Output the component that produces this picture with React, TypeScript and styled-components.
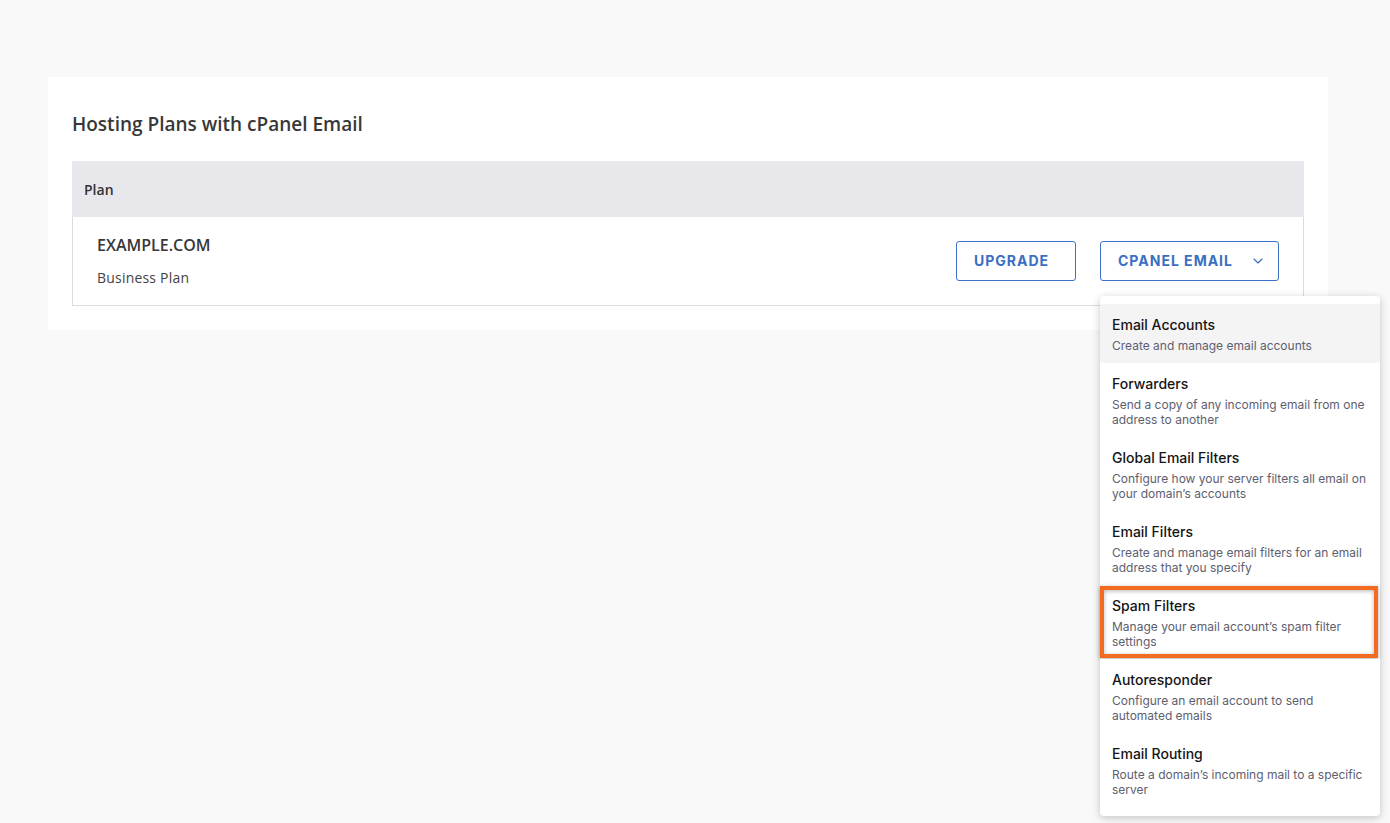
import * as React from 'react';
import styled, { createGlobalStyle } from 'styled-components';
import { ChevronDown } from 'lucide-react';

const GlobalStyle = createGlobalStyle`
    body {
        margin: 0;
        background: #f9f9f9;
        font-family: "Open Sans", "Noto Sans", sans-serif;
    }
`;

const Page = styled.div`
    padding: 77px 48px;
    min-height: 823px;
    box-sizing: border-box;
`;
const Card = styled.section`
    width: 1280px;
    box-sizing: border-box;
    background: #fff;
    padding: 33px 24px 24px;
`;
const Title = styled.h2`
    margin: 0 0 23px;
    font-size: 19px;
    line-height: 28px;
    font-weight: 600;
    color: #383838;
`;
const Table = styled.div`
    display: flex;
    flex-direction: column;
`;
const HeaderRow = styled.div`
    height: 56px;
    display: flex;
    align-items: center;
    padding: 0 12px;
    background: #e8e8ec;
    font-size: 14px;
    font-weight: 600;
    color: #333;
`;
const Row = styled.div`
    display: flex;
    align-items: center;
    justify-content: space-between;
    padding: 16px 24px 17px;
    border: 1px solid #dcdcdc;
    border-top: none;
`;
const PlanInfo = styled.div`
    display: flex;
    flex-direction: column;
    gap: 11px;
`;
const Domain = styled.div`
    font-size: 16px;
    line-height: 24px;
    font-weight: 600;
    color: #383838;
`;
const PlanName = styled.div`
    font-size: 14px;
    line-height: 20px;
    color: #444;
    letter-spacing: 0.2px;
`;
const Actions = styled.div`
    display: flex;
    gap: 24px;
`;
const Button = styled.button<{ $width: number }>`
    width: ${p => p.$width}px;
    height: 40px;
    box-sizing: border-box;
    display: flex;
    align-items: center;
    justify-content: space-between;
    padding: 0 12px 0 17px;
    background: #fff;
    border: 1px solid #3a73c4;
    border-radius: 3px;
    color: #3a6fc2;
    font-family: Inter, sans-serif;
    font-size: 14px;
    font-weight: 700;
    letter-spacing: 1px;
    cursor: pointer;
`;
const MenuAnchor = styled.div`
    position: relative;
`;
const Menu = styled.ul`
    position: absolute;
    top: calc(100% + 15px);
    left: 0;
    width: 280px;
    margin: 0;
    padding: 8px 0 9px;
    list-style: none;
    background: #fff;
    border-radius: 4px;
    box-shadow: 0 2px 8px rgba(0, 0, 0, 0.22);
    z-index: 10;
`;
const MenuItem = styled.li<{ $active?: boolean; $marked?: boolean }>`
    position: relative;
    padding: 11px 12px 10px;
    background: ${p => (p.$active ? '#f4f4f5' : '#fff')};
    font-family: Inter, sans-serif;
    &::after {
        content: '';
        display: ${p => (p.$marked ? 'block' : 'none')};
        position: absolute;
        inset: 1px 2px 1px 0;
        border: 4px solid #f26b21;
        box-shadow: 0 1px 4px rgba(0, 0, 0, 0.35), inset 0 1px 4px rgba(0, 0, 0, 0.3);
        pointer-events: none;
    }
`;
const ItemTitle = styled.div`
    font-size: 14px;
    line-height: 20px;
    font-weight: 500;
    color: #151515;
    margin-bottom: 3px;
`;
const ItemDesc = styled.div`
    font-size: 12px;
    line-height: 15px;
    color: #5d6070;
`;

const items = [
    { title: 'Email Accounts', desc: 'Create and manage email accounts' },
    { title: 'Forwarders', desc: 'Send a copy of any incoming email from one address to another' },
    { title: 'Global Email Filters', desc: 'Configure how your server filters all email on your domain\u2019s accounts' },
    { title: 'Email Filters', desc: 'Create and manage email filters for an email address that you specify' },
    { title: 'Spam Filters', desc: 'Manage your email account\u2019s spam filter settings' },
    { title: 'Autoresponder', desc: 'Configure an email account to send automated emails' },
    { title: 'Email Routing', desc: 'Route a domain\u2019s incoming mail to a specific server' },
];

export default function App() {
    return (
        <Page>
            <GlobalStyle />
            <Card>
                <Title>Hosting Plans with cPanel Email</Title>
                <Table>
                    <HeaderRow>Plan</HeaderRow>
                    <Row>
                        <PlanInfo>
                            <Domain>EXAMPLE.COM</Domain>
                            <PlanName>Business Plan</PlanName>
                        </PlanInfo>
                        <Actions>
                            <Button $width={120}>UPGRADE</Button>
                            <MenuAnchor>
                                <Button $width={179}>
                                    CPANEL EMAIL
                                    <ChevronDown size={16} strokeWidth={1.75} />
                                </Button>
                                <Menu>
                                    {items.map((item, i) => (
                                        <MenuItem key={item.title} $active={i === 0} $marked={item.title === 'Spam Filters'}>
                                            <ItemTitle>{item.title}</ItemTitle>
                                            <ItemDesc>{item.desc}</ItemDesc>
                                        </MenuItem>
                                    ))}
                                </Menu>
                            </MenuAnchor>
                        </Actions>
                    </Row>
                </Table>
            </Card>
        </Page>
    );
}
